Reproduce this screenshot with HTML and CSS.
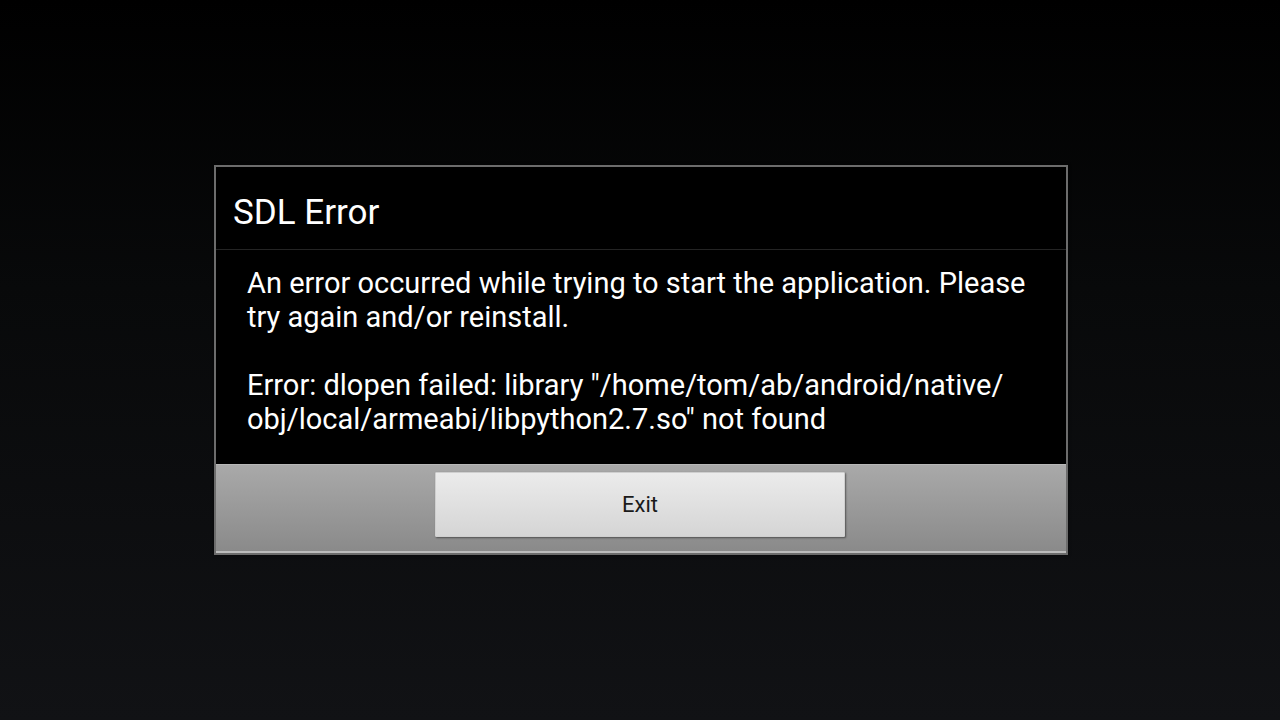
FILE: index.html
```html
<!DOCTYPE html>
<html>
<head>
<meta charset="utf-8">
<link rel="stylesheet" href="styles.css">
</head>
<body>
<div class="screen">
  <div class="dialog">
    <div class="title">SDL Error</div>
    <div class="message">
      <p>An error occurred while trying to start the application. Please try again and/or reinstall.</p>
      <p>Error: dlopen failed: library "/home/tom/ab/android/native/ obj/local/armeabi/libpython2.7.so" not found</p>
    </div>
    <div class="buttonbar">
      <button class="btn">Exit</button>
    </div>
  </div>
</div>
</body>
</html>
```

FILE: styles.css
```css
html, body {
  margin: 0;
  padding: 0;
}
body {
  width: 1280px;
  height: 720px;
  background: linear-gradient(180deg, #000000 0%, #08090a 40%, #111215 100%);
  font-family: Roboto, "Noto Sans", sans-serif;
  overflow: hidden;
}
.screen {
  width: 1280px;
  height: 720px;
  display: flex;
  align-items: center;
  justify-content: center;
}
.dialog {
  width: 850px;
  border: 2px solid #6c6c6c;
  background: #000;
  display: flex;
  flex-direction: column;
  margin-left: 2px;
  margin-top: 0;
  box-shadow: 0 0 3px rgba(0,0,0,0.6);
}
.title {
  height: 83px;
  box-sizing: border-box;
  display: flex;
  align-items: center;
  padding-left: 17px;
  padding-top: 8px;
  color: #fff;
  font-size: 35px;
  border-bottom: 1px solid #242424;
}
.message {
  padding: 16px 20px 28px 31px;
  color: #fff;
  font-size: 29px;
  line-height: 34px;
}
.message p {
  margin: 0 0 34px 0;
}
.message p:last-child {
  margin-bottom: 0;
}
.buttonbar {
  height: 89px;
  box-sizing: border-box;
  border-top: 1px solid #b8b8b8;
  border-bottom: 2px solid #bcbcbc;
  background: linear-gradient(180deg, #a9a9a9 0%, #8a8a8a 100%);
  display: flex;
  justify-content: center;
  align-items: flex-start;
  padding-top: 7px;
}
.btn {
  width: 410px;
  height: 65px;
  border: 1px solid #cfcfcf;
  border-radius: 1px;
  background: linear-gradient(180deg, #ebebeb 0%, #d5d5d5 100%);
  box-shadow: 1px 1px 2px rgba(0,0,0,0.45);
  font-family: Roboto, "Noto Sans", sans-serif;
  font-size: 22px;
  color: #1a1a1a;
  padding: 0;
  margin-left: -2px;
}
```
